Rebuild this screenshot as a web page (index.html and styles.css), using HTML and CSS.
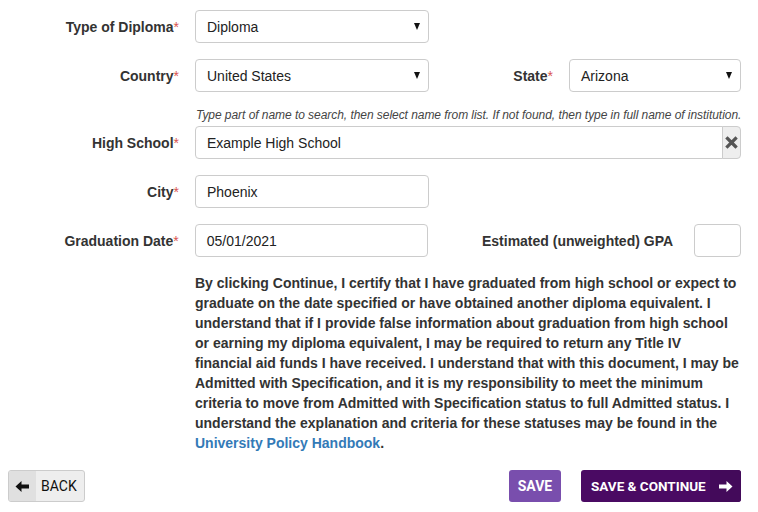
FILE: index.html
```html
<!DOCTYPE html>
<html>
<head>
<meta charset="utf-8">
<link rel="stylesheet" href="styles.css">
</head>
<body>
<div class="form">
  <div class="row">
    <label class="lbl">Type of Diploma<span class="req">*</span></label>
    <div class="field sel w234"><span>Diploma</span><span class="caret"></span></div>
  </div>
  <div class="row">
    <label class="lbl">Country<span class="req">*</span></label>
    <div class="field sel w234"><span>United States</span><span class="caret"></span></div>
    <label class="lbl2 state">State<span class="req">*</span></label>
    <div class="field sel w172"><span>Arizona</span><span class="caret"></span></div>
  </div>
  <div class="hint">Type part of name to search, then select name from list. If not found, then type in full name of institution.</div>
  <div class="row">
    <label class="lbl">High School<span class="req">*</span></label>
    <div class="group">
      <div class="field grow"><span>Example High School</span></div>
      <div class="clear"><svg width="13" height="13" viewBox="0 0 13 13"><path d="M2.5 2.5 L10.5 10.5 M10.5 2.5 L2.5 10.5" stroke="#555" stroke-width="3.2" stroke-linecap="square"/></svg></div>
    </div>
  </div>
  <div class="row">
    <label class="lbl">City<span class="req">*</span></label>
    <div class="field w234"><span>Phoenix</span></div>
  </div>
  <div class="row">
    <label class="lbl">Graduation Date<span class="req">*</span></label>
    <div class="field w234"><span>05/01/2021</span></div>
    <label class="lbl2 gpa">Estimated (unweighted) GPA</label>
    <div class="field w46"></div>
  </div>
  <p class="cert">By clicking Continue, I certify that I have graduated from high school or expect to graduate on the date specified or have obtained another diploma equivalent. I understand that if I provide false information about graduation from high school or earning my diploma equivalent, I may be required to return any Title IV financial aid funds I have received. I understand that with this document, I may be Admitted with Specification, and it is my responsibility to meet the minimum criteria to move from Admitted with Specification status to full Admitted status. I understand the explanation and criteria for these statuses may be found in the <a href="#">University Policy Handbook</a>.</p>
  <div class="actions">
    <button class="btn back"><span class="bicon"><svg width="15" height="13" viewBox="0 0 15 13"><path d="M0.5 6.5 L6.5 1 V4.6 H14 V8.4 H6.5 V12 Z" fill="#111"/></svg></span><span class="btxt">BACK</span></button>
    <div class="right">
      <button class="btn save">SAVE</button>
      <button class="btn cont"><span class="ctxt">SAVE &amp; CONTINUE</span><span class="cicon"><svg width="15" height="13" viewBox="0 0 15 13"><path d="M14.5 6.5 L8.5 1 V4.6 H1 V8.4 H8.5 V12 Z" fill="#fff"/></svg></span></button>
    </div>
  </div>
</div>
</body>
</html>
```
FILE: styles.css
```css
* { box-sizing: border-box; }
body {
  margin: 0;
  font-family: "Liberation Sans", Arial, sans-serif;
  font-size: 14px;
  color: #333;
  background: #fff;
}
.form {
  padding: 10px 17px 0 0;
  width: 758px;
}
.row {
  display: flex;
  align-items: center;
  margin-bottom: 16px;
}
.lbl {
  width: 179px;
  text-align: right;
  font-weight: bold;
  margin-right: 16px;
  color: #333;
}
.lbl2 {
  font-weight: bold;
  text-align: right;
  color: #333;
}
.state { width: 124px; margin-right: 16px; }
.gpa { width: 245px; margin-right: 21px; }
.req { color: #d9534f; font-weight: normal; }
.field {
  height: 33px;
  border: 1px solid #ccc;
  border-radius: 4px;
  display: flex;
  align-items: center;
  padding: 0 11px;
  color: #222;
  background: #fff;
}
.w234 { width: 234px; }
.w172 { width: 172px; }
.w46 { width: 47px; }
.sel { justify-content: space-between; padding-right: 8px; }
.caret {
  width: 0;
  height: 0;
  border-left: 3.5px solid transparent;
  border-right: 3.5px solid transparent;
  border-top: 7px solid #111;
}
.hint {
  margin: 3px 0 4px 196px;
  font-size: 12px;
  font-style: italic;
  color: #444;
  line-height: 14px;
  white-space: nowrap;
  letter-spacing: -0.05px;
}
.group {
  display: flex;
  width: 546px;
}
.grow {
  flex: 1;
  border-radius: 4px 0 0 4px;
}
.clear {
  width: 19px;
  height: 33px;
  background: #eee;
  border: 1px solid #ccc;
  margin-left: -1px;
  border-radius: 0 4px 4px 0;
  display: flex;
  align-items: center;
  justify-content: center;
}
.cert {
  margin: 0 0 0 195px;
  width: 546px;
  font-weight: bold;
  line-height: 20px;
  color: #333;
}
.cert a { color: #337ab7; text-decoration: none; }
.actions {
  display: flex;
  justify-content: space-between;
  margin-top: 17px;
  padding-left: 8px;
}
.right { display: flex; gap: 20px; }
.btn {
  height: 32px;
  border-radius: 3px;
  font-family: Roboto, "Liberation Sans", sans-serif;
  font-size: 14px;
  display: flex;
  align-items: center;
  padding: 0;
  cursor: pointer;
}
.back {
  width: 77px;
  border: 1px solid #ccc;
  background: #eee;
  color: #111;
  overflow: hidden;
}
.bicon {
  width: 27px;
  height: 100%;
  background: #e0e0e0;
  display: flex;
  align-items: center;
  justify-content: center;
}
.btxt { padding-left: 5px; }
.save {
  width: 52px;
  justify-content: center;
  background: #794ead;
  color: #fff;
  border: none;
  font-weight: bold;
}
.cont {
  width: 160px;
  background: #4a0a63;
  color: #fff;
  border: none;
  font-weight: bold;
  font-size: 13.5px;
  overflow: hidden;
}
.ctxt { padding-left: 10px; width: 129px; text-align: left; white-space: nowrap; }
.cicon {
  width: 31px;
  height: 100%;
  background: #430a5a;
  display: flex;
  align-items: center;
  justify-content: center;
}
```
